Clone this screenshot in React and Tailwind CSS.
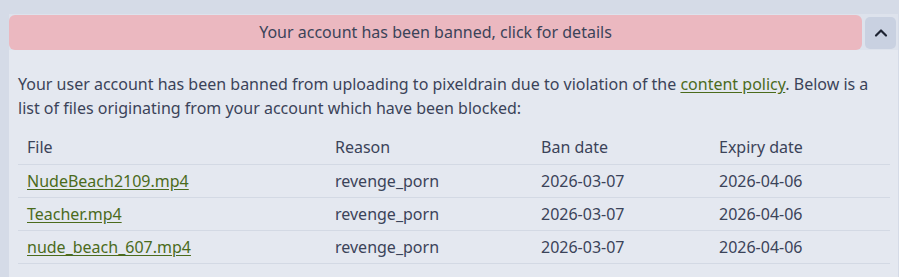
import { ChevronUp } from "lucide-react";

const BLOCKED = [
  { file: "NudeBeach2109.mp4", reason: "revenge_porn", banned: "2026-03-07", expires: "2026-04-06" },
  { file: "Teacher.mp4", reason: "revenge_porn", banned: "2026-03-07", expires: "2026-04-06" },
  { file: "nude_beach_607.mp4", reason: "revenge_porn", banned: "2026-03-07", expires: "2026-04-06" },
];

export default function App() {
  return (
    <div className="min-h-screen bg-[#d5dbe7] pl-[9px] pt-[14px] text-[16px] text-[#3b4359]"
      style={{ fontFamily: "'Segoe UI', 'Noto Sans', sans-serif" }}>
      <div className="w-[889px] h-[263px] bg-[#e4e8f0]">

        {/* Ban banner */}
        <div className="flex items-center gap-[3px] bg-[#dde2ec] pt-px pr-[2px]">
          <button className="flex-1 h-[35px] rounded-[6px] bg-[#ebb8c0] text-center leading-[35px]">
            Your account has been banned, click for details
          </button>
          <button className="w-[31px] h-[32px] rounded-[5px] bg-[#c9d1e1] flex items-center justify-center text-[#1e2433]">
            <ChevronUp size={20} strokeWidth={2.6}/>
          </button>
        </div>

        {/* Details */}
        <div className="px-[9px] pt-[22px]">
          <p className="leading-[24px]">
            Your user account has been banned from uploading to pixeldrain due to violation of the{" "}
            <a href="#" className="text-[#4b6b1c] underline underline-offset-2">content policy</a>. Below is a
            list of files originating from your account which have been blocked:
          </p>

          <table className="mt-[11px] w-[872px] border-collapse text-left">
            <thead>
              <tr className="h-[33px] border-b border-[#d3d9e4]">
                <th className="w-[308px] px-[9px] font-normal">File</th>
                <th className="w-[206px] px-[9px] font-normal">Reason</th>
                <th className="w-[178px] px-[9px] font-normal">Ban date</th>
                <th className="px-[9px] font-normal">Expiry date</th>
              </tr>
            </thead>
            <tbody>
              {BLOCKED.map((f, i) => (
                <tr key={i} className="h-[33px] border-b border-[#d3d9e4]">
                  <td className="px-[9px]">
                    <a href="#" className="text-[#4b6b1c] underline underline-offset-2">{f.file}</a>
                  </td>
                  <td className="px-[9px]">{f.reason}</td>
                  <td className="px-[9px]">{f.banned}</td>
                  <td className="px-[9px]">{f.expires}</td>
                </tr>
              ))}
            </tbody>
          </table>
        </div>
      </div>
    </div>
  );
}
